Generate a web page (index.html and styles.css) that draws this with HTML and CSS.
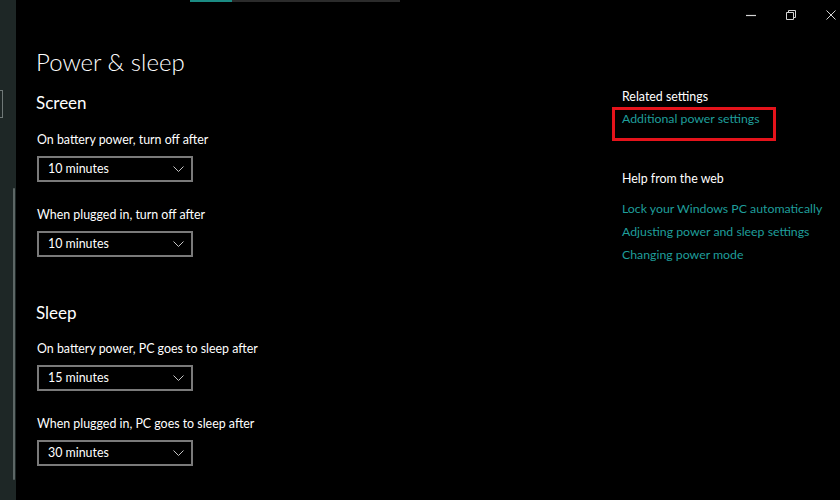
FILE: index.html
```html
<!DOCTYPE html>
<html lang="en">
<head>
    <meta charset="UTF-8">
    <title>Power &amp; sleep</title>
    <link rel="stylesheet" href="styles.css">
</head>
<body>
    <div class="window">
        <!-- 左侧导航（被遮住的部分） -->
        <div class="sideNav">
            <span class="navMark"></span>
            <span class="navScroll"></span>
        </div>

        <div class="main">
            <!-- 标题栏 -->
            <div class="titleBar">
                <span class="searchLine"><i></i></span>
                <div class="winBtns">
                    <a class="winBtn" href="javascript:;">
                        <svg width="10" height="10" viewBox="0 0 10 10"><path d="M0 5.5h10" stroke="#d4d4d4" stroke-width="1.2"/></svg>
                    </a>
                    <a class="winBtn" href="javascript:;">
                        <svg width="10" height="10" viewBox="0 0 10 10"><path d="M0.5 2.5h7v7h-7z M2.5 2.5v-2h7v7h-2" fill="none" stroke="#d4d4d4" stroke-width="1"/></svg>
                    </a>
                    <a class="winBtn close" href="javascript:;">
                        <svg width="10" height="10" viewBox="0 0 10 10"><path d="M0.5 0.5l9 9M9.5 0.5l-9 9" stroke="#d4d4d4" stroke-width="1"/></svg>
                    </a>
                </div>
            </div>

            <div class="page">
                <div class="settings">
                    <h1>Power &amp; sleep</h1>

                    <h2>Screen</h2>
                    <p class="label">On battery power, turn off after</p>
                    <div class="select">10 minutes<svg class="chevron" width="11" height="6" viewBox="0 0 11 6"><path d="M0.5 0.5l5 5 5-5" fill="none" stroke="#c4c4c4" stroke-width="1"/></svg></div>
                    <p class="label">When plugged in, turn off after</p>
                    <div class="select">10 minutes<svg class="chevron" width="11" height="6" viewBox="0 0 11 6"><path d="M0.5 0.5l5 5 5-5" fill="none" stroke="#c4c4c4" stroke-width="1"/></svg></div>

                    <h2 class="sleep">Sleep</h2>
                    <p class="label">On battery power, PC goes to sleep after</p>
                    <div class="select">15 minutes<svg class="chevron" width="11" height="6" viewBox="0 0 11 6"><path d="M0.5 0.5l5 5 5-5" fill="none" stroke="#c4c4c4" stroke-width="1"/></svg></div>
                    <p class="label">When plugged in, PC goes to sleep after</p>
                    <div class="select">30 minutes<svg class="chevron" width="11" height="6" viewBox="0 0 11 6"><path d="M0.5 0.5l5 5 5-5" fill="none" stroke="#c4c4c4" stroke-width="1"/></svg></div>
                </div>

                <div class="related">
                    <h3>Related settings</h3>
                    <a class="link marked" href="javascript:;">Additional power settings</a>

                    <h3 class="help">Help from the web</h3>
                    <a class="link" href="javascript:;">Lock your Windows PC automatically</a>
                    <a class="link" href="javascript:;">Adjusting power and sleep settings</a>
                    <a class="link" href="javascript:;">Changing power mode</a>
                </div>
            </div>
        </div>
    </div>
</body>
</html>
```

FILE: styles.css
```css
* {
    padding: 0;
    margin: 0;
    box-sizing: border-box;
}

body {
    background-color: #000;
    font-family: Lato, "Open Sans", sans-serif;
    color: #fff;
}

.window {
    display: flex;
    width: 840px;
    height: 500px;
    overflow: hidden;
}

/* 左侧 */
.sideNav {
    width: 16px;
    flex-shrink: 0;
    background-color: #1e2726;
    display: flex;
    flex-direction: column;
}

.sideNav .navMark {
    display: block;
    width: 3px;
    height: 28px;
    margin-top: 90px;
    border: 1px solid #6f7877;
    border-left: none;
}

.sideNav .navScroll {
    display: block;
    width: 2px;
    height: 292px;
    margin-top: 70px;
    margin-left: 13px;
    background-color: #5d6766;
    border-radius: 1px;
}

.main {
    flex: 1;
    display: flex;
    flex-direction: column;
}

/* 标题栏 */
.titleBar {
    height: 30px;
    display: flex;
    justify-content: space-between;
}

.titleBar .searchLine {
    display: block;
    width: 210px;
    height: 2px;
    margin-left: 174px;
    background-color: #2b2b2b;
}

.titleBar .searchLine i {
    display: block;
    width: 42px;
    height: 2px;
    background-color: #1b8b83;
}

.winBtns {
    display: flex;
}

.winBtn {
    display: flex;
    width: 40px;
    height: 30px;
    align-items: center;
    justify-content: center;
}

.winBtn.close {
    width: 29px;
    justify-content: flex-start;
    padding-left: 15px;
}

/* 内容 */
.page {
    flex: 1;
    display: flex;
    padding-left: 20px;
}

.settings {
    width: 586px;
}

.settings h1 {
    font-size: 24px;
    font-weight: 300;
    line-height: 34px;
    margin-top: 15px;
}

.settings h2 {
    font-size: 17px;
    font-weight: 400;
    line-height: 24px;
    margin-top: 12px;
}

.settings h2.sleep {
    margin-top: 44px;
}

.settings .label {
    font-size: 12.4px;
    line-height: 18px;
    margin-top: 16px;
    margin-left: 1px;
}

.select {
    position: relative;
    width: 156px;
    height: 26px;
    margin-top: 7px;
    margin-left: 1px;
    border: 2px solid #7a7a7a;
    padding-left: 9px;
    font-size: 12.4px;
    line-height: 22px;
}

.select + .label {
    margin-top: 24px;
}

.settings h2.sleep + .label {
    margin-top: 15px;
}

.select .chevron {
    position: absolute;
    right: 7px;
    top: 8px;
}

/* 右侧 */
.related {
    display: flex;
    flex-direction: column;
    align-items: flex-start;
    padding-top: 58px;
}

.related h3 {
    font-size: 12.4px;
    font-weight: 400;
    line-height: 18px;
}

.related h3.help {
    margin-top: 29px;
}

.related .link {
    font-size: 12.3px;
    line-height: 18px;
    color: #1f9e9b;
    text-decoration: none;
    margin-top: 5px;
}

.related .link.marked {
    margin: 1px 0 0 -10px;
    padding: 0 14px 10px 7px;
    border: 3px solid #e5131b;
}

.related .help + .link {
    margin-top: 12px;
}
```
